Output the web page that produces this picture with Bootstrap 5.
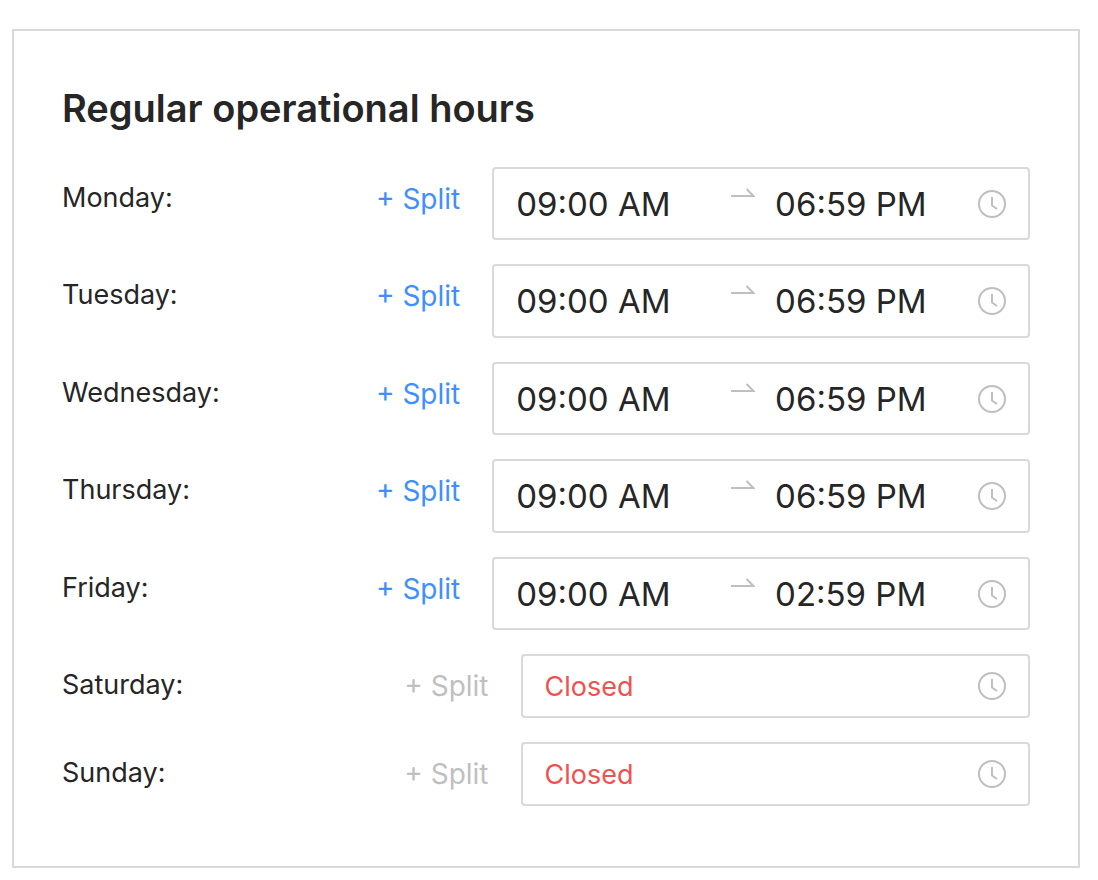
<!DOCTYPE html>
<html lang="en">
<head>
<meta charset="utf-8">
<meta name="viewport" content="width=device-width, initial-scale=1">
<title>Regular operational hours</title>
<link href="https://cdn.jsdelivr.net/npm/bootstrap@5.3.0/dist/css/bootstrap.min.css" rel="stylesheet">
<style>
  body { font-family: Inter, "Liberation Sans", sans-serif; font-size: 27px; color: #262626; background: #fff; }
  .hours-page { padding: 29px 18px 12px 12px; }
  .hours-card { border: 2px solid #d9d9d9; border-radius: 0; color: inherit; }
  .hours-card > .card-body { padding: 48px 48px 60px; }
  .hours-title { font-size: 38px; font-weight: 600; line-height: 58px; margin-bottom: 30px; }
  .hours-list { gap: 24px; }
  .day-row { display: grid; grid-template-columns: minmax(0, 4fr) minmax(0, 5fr); }
  .day-row.is-closed { grid-template-columns: minmax(0, 9fr) minmax(0, 10fr); }
  .day-label { line-height: 62px; }
  .split-btn { font-size: 28px; line-height: 64px; height: 64px; padding: 0; border: 0; margin-right: 32px; color: #408fff; white-space: nowrap; }
  .split-btn:hover { color: #1f6fe0; }
  .split-btn:disabled { color: #bfbfbf; border: 0; opacity: 1; }
  .time-box { height: 73px; border: 2px solid #d9d9d9; border-radius: 4px; padding: 0 22px; }
  .day-row:nth-child(even) .time-box { height: 74px; }
  .day-row.is-closed .time-box { height: 64px; }
  .time-box input { flex: 1 1 0; width: 100%; min-width: 0; border: 0; padding: 0; font-size: 33px; line-height: 48px; color: inherit; background: transparent; }
  .day-row.is-closed input { font-size: 27px; line-height: 40px; padding-top: 2px; color: #f0524f; }
  .range-arrow { width: 24px; height: 28px; margin: 8px 20px 0 20px; flex: none; align-self: flex-start; }
  .clock-icon { width: 28px; height: 28px; margin-left: 8px; flex: none; }
  .range-arrow, .clock-icon { fill: none; stroke: #bfbfbf; stroke-width: 2; }
</style>
</head>
<body>
<svg class="d-none" aria-hidden="true">
  <symbol id="clock" viewBox="0 0 28 28"><circle cx="14" cy="14" r="13"/><path d="M14 7v8.500l5 3.500"/></symbol>
  <symbol id="arrow" viewBox="0 0 24 28"><path d="M0 19h22.500L15.500 12"/></symbol>
</svg>
<main class="hours-page">
  <section class="card hours-card">
    <div class="card-body">
      <h1 class="hours-title">Regular operational hours</h1>
      <div class="hours-list d-flex flex-column">
        <div class="day-row">
          <div class="d-flex justify-content-between align-items-start">
            <label class="day-label" for="mon">Monday:</label>
            <button type="button" class="btn split-btn">+ Split</button>
          </div>
          <div class="time-box d-flex align-items-center">
            <input id="mon" type="text" value="09:00 AM">
            <svg class="range-arrow" aria-hidden="true"><use href="#arrow"/></svg>
            <input type="text" value="06:59 PM" aria-label="Monday closing time">
            <svg class="clock-icon" aria-hidden="true"><use href="#clock"/></svg>
          </div>
        </div>
        <div class="day-row">
          <div class="d-flex justify-content-between align-items-start">
            <label class="day-label" for="tue">Tuesday:</label>
            <button type="button" class="btn split-btn">+ Split</button>
          </div>
          <div class="time-box d-flex align-items-center">
            <input id="tue" type="text" value="09:00 AM">
            <svg class="range-arrow" aria-hidden="true"><use href="#arrow"/></svg>
            <input type="text" value="06:59 PM" aria-label="Tuesday closing time">
            <svg class="clock-icon" aria-hidden="true"><use href="#clock"/></svg>
          </div>
        </div>
        <div class="day-row">
          <div class="d-flex justify-content-between align-items-start">
            <label class="day-label" for="wed">Wednesday:</label>
            <button type="button" class="btn split-btn">+ Split</button>
          </div>
          <div class="time-box d-flex align-items-center">
            <input id="wed" type="text" value="09:00 AM">
            <svg class="range-arrow" aria-hidden="true"><use href="#arrow"/></svg>
            <input type="text" value="06:59 PM" aria-label="Wednesday closing time">
            <svg class="clock-icon" aria-hidden="true"><use href="#clock"/></svg>
          </div>
        </div>
        <div class="day-row">
          <div class="d-flex justify-content-between align-items-start">
            <label class="day-label" for="thu">Thursday:</label>
            <button type="button" class="btn split-btn">+ Split</button>
          </div>
          <div class="time-box d-flex align-items-center">
            <input id="thu" type="text" value="09:00 AM">
            <svg class="range-arrow" aria-hidden="true"><use href="#arrow"/></svg>
            <input type="text" value="06:59 PM" aria-label="Thursday closing time">
            <svg class="clock-icon" aria-hidden="true"><use href="#clock"/></svg>
          </div>
        </div>
        <div class="day-row">
          <div class="d-flex justify-content-between align-items-start">
            <label class="day-label" for="fri">Friday:</label>
            <button type="button" class="btn split-btn">+ Split</button>
          </div>
          <div class="time-box d-flex align-items-center">
            <input id="fri" type="text" value="09:00 AM">
            <svg class="range-arrow" aria-hidden="true"><use href="#arrow"/></svg>
            <input type="text" value="02:59 PM" aria-label="Friday closing time">
            <svg class="clock-icon" aria-hidden="true"><use href="#clock"/></svg>
          </div>
        </div>
        <div class="day-row is-closed">
          <div class="d-flex justify-content-between align-items-start">
            <label class="day-label" for="sat">Saturday:</label>
            <button type="button" class="btn split-btn" disabled>+ Split</button>
          </div>
          <div class="time-box d-flex align-items-center">
            <input id="sat" type="text" value="Closed">
            <svg class="clock-icon" aria-hidden="true"><use href="#clock"/></svg>
          </div>
        </div>
        <div class="day-row is-closed">
          <div class="d-flex justify-content-between align-items-start">
            <label class="day-label" for="sun">Sunday:</label>
            <button type="button" class="btn split-btn" disabled>+ Split</button>
          </div>
          <div class="time-box d-flex align-items-center">
            <input id="sun" type="text" value="Closed">
            <svg class="clock-icon" aria-hidden="true"><use href="#clock"/></svg>
          </div>
        </div>
      </div>
    </div>
  </section>
</main>
<script src="https://cdn.jsdelivr.net/npm/bootstrap@5.3.0/dist/js/bootstrap.bundle.min.js"></script>
</body>
</html>
